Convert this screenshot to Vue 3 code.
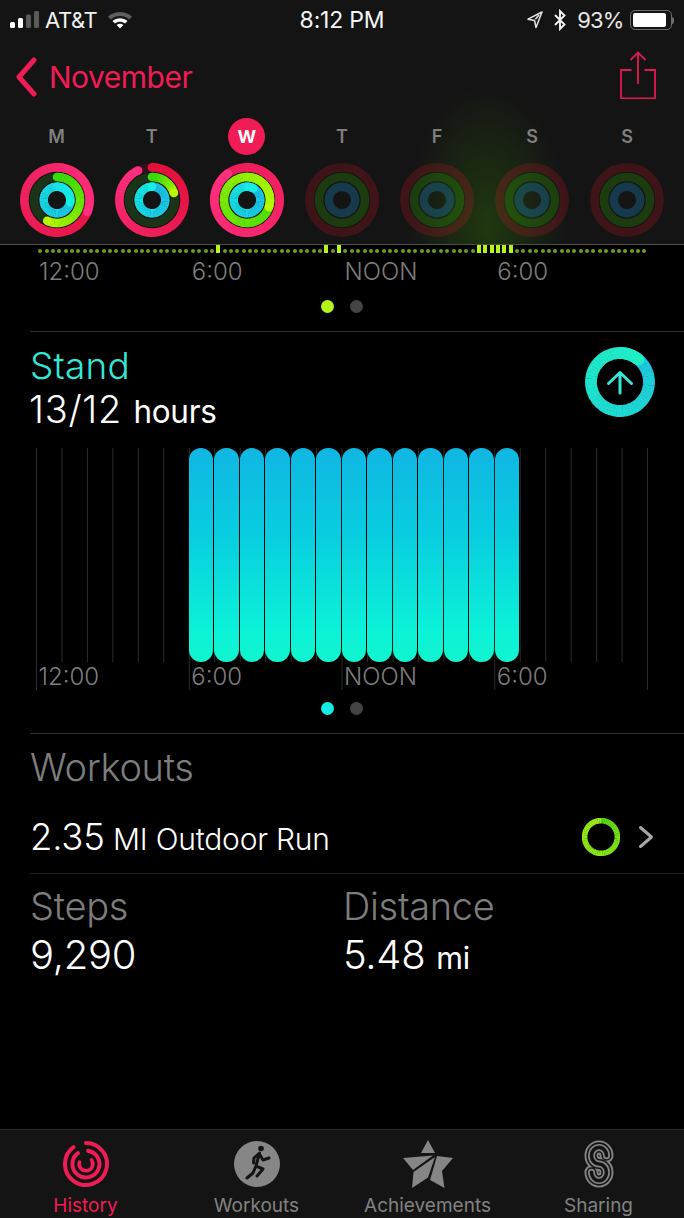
<script setup>
const C = 38
function hex(c) {
  return [1, 3, 5].map((i) => parseInt(c.slice(i, i + 2), 16))
}
function mix(a, b, t) {
  const x = hex(a)
  const y = hex(b)
  return `rgb(${x.map((v, i) => Math.round(v + (y[i] - v) * t)).join(',')})`
}
function pt(r, deg, c = C) {
  const a = ((deg - 90) * Math.PI) / 180
  return [c + r * Math.cos(a), c + r * Math.sin(a)]
}
function arcSegments(r, w, frac, c0, c1, c = C, power = 1.2) {
  const total = frac * 360
  const step = 6
  const out = []
  for (let d = 0; d < total; d += step) {
    const end = Math.min(d + step + 0.8, total)
    const [x0, y0] = pt(r, d, c)
    const [x1, y1] = pt(r, end, c)
    out.push({
      d: `M${x0.toFixed(2)} ${y0.toFixed(2)}A${r} ${r} 0 0 1 ${x1.toFixed(2)} ${y1.toFixed(2)}`,
      color: mix(c0, c1, Math.pow(d / total, power)),
      w,
    })
  }
  const s = pt(r, 0, c)
  const e = pt(r, total, c)
  return {
    segs: out,
    r,
    w,
    startCap: { x: s[0], y: s[1], color: c0 },
    endCap: { x: e[0], y: e[1], color: c1 },
  }
}
const RED0 = '#e2103a'
const RED1 = '#ff2f80'
const GRN0 = '#38dc08'
const GRN1 = '#b8f800'
const BLU0 = '#1cc0ea'
const BLU1 = '#16efe4'
function ring(m, g, b) {
  return [
    arcSegments(32.6, 8.6, m, RED0, RED1),
    arcSegments(23, 8.6, g, GRN0, GRN1),
    arcSegments(13.3, 8.4, b, BLU0, BLU1),
  ]
}
const days = [
  { label: 'M', arcs: ring(1.31, 0.57, 1.28) },
  { label: 'T', arcs: ring(0.93, 0.2, 1.0) },
  { label: 'W', today: true, arcs: ring(1.9, 1.3, 1.08) },
  { label: 'T', dim: true, arcs: [] },
  { label: 'F', dim: true, arcs: [] },
  { label: 'S', dim: true, arcs: [] },
  { label: 'S', dim: true, arcs: [] },
]
const tracks = [
  { r: 32.6, w: 8.6, cls: 'track-r' },
  { r: 23, w: 8.6, cls: 'track-g' },
  { r: 13.3, w: 8.4, cls: 'track-b' },
]
const high = new Set([28, 45, 47, 69, 70, 71, 72, 73, 74])
const ticks = Array.from({ length: 96 }, (_, i) => high.has(i))
const labels = ['12:00', '6:00', 'NOON', '6:00']
const bars = Array.from({ length: 13 }, (_, i) => i)
const gridLines = Array.from({ length: 25 }, (_, i) => ({
  x: 0.5 + i * 25.46,
  y2: i % 6 === 0 ? 242 : 214,
}))
const standRing = arcSegments(29, 11.8, 1.11, '#1cb6e8', '#1ff0c4', 35, 0.6)
const workoutRing = arcSegments(16.4, 5.6, 1.0, '#3ed414', '#9cec18', 19, 0.35)
const sPath = 'M23.5 16.7A7.5 8.3 0 1 0 16 25A7.5 8.3 0 1 1 8.5 33.3'
</script>

<template>
  <div class="screen">
    <header class="top">
      <div class="status">
        <div class="st-left">
          <svg class="signal" width="30" height="20" viewBox="0 0 30 20">
            <rect x="0" y="12" width="5" height="6" rx="1.5" fill="#fff" />
            <rect x="8" y="8" width="5" height="10" rx="1.5" fill="#fff" />
            <rect x="16" y="4.5" width="5" height="13.5" rx="1.5" fill="#5a5a5a" />
            <rect x="24" y="1" width="5" height="17" rx="1.5" fill="#5a5a5a" />
          </svg>
          <span class="carrier">AT&amp;T</span>
          <svg width="26" height="20" viewBox="0 0 26 20">
            <path d="M1 6.5C8 0.5 18 0.5 25 6.5L22.3 9.4C16.6 4.8 9.4 4.8 3.7 9.4Z" fill="#5f5f5f" />
            <path d="M5.5 11C10 7.3 16 7.3 20.5 11L18 13.6C15 11.2 11 11.2 8 13.6Z" fill="#fff" />
            <path d="M9.6 15C11.6 13.4 14.4 13.4 16.4 15L13 18.6Z" fill="#fff" />
          </svg>
        </div>
        <div class="st-time">8:12 PM</div>
        <div class="st-right">
          <svg width="16" height="18" viewBox="0 0 16 18">
            <path d="M15 1L1 8.2L7.6 9.6L9 16.6Z M12 4L8.4 8.2" fill="none" stroke="#e4e4e4" stroke-width="1.5" stroke-linejoin="round" />
          </svg>
          <svg class="bt" width="12" height="22" viewBox="0 0 12 22">
            <path d="M1 6L10.5 15.5L6 20V2L10.5 6.5L1 16" fill="none" stroke="#f2f2f2" stroke-width="1.9" />
          </svg>
          <span class="batt-text">93%</span>
          <div class="battery">
            <div class="batt-body"><div class="batt-fill"></div></div>
            <div class="batt-nub"></div>
          </div>
        </div>
      </div>
      <div class="nav">
        <div class="back">
          <svg width="22" height="40" viewBox="0 0 22 40">
            <path d="M19 3L4 20L19 37" fill="none" stroke="#f01c55" stroke-width="5" stroke-linecap="round" stroke-linejoin="round" />
          </svg>
          <span>November</span>
        </div>
        <svg class="share" width="36" height="48" viewBox="0 0 36 48">
          <path d="M11.5 19H1V47.5H35V19H24.5M18 33V1.5M10.5 9L18 1.5L25.5 9" fill="none" stroke="#e01a50" stroke-width="1.8" />
        </svg>
      </div>
      <div class="week">
        <div v-for="(d, i) in days" :key="i" class="day">
          <div class="day-label" :class="{ today: d.today }">{{ d.label }}</div>
          <svg class="ring" width="76" height="76" viewBox="0 0 76 76">
            <circle
              v-for="t in tracks"
              :key="t.r"
              :cx="38"
              :cy="38"
              :r="t.r"
              :stroke-width="t.w"
              fill="none"
              :class="[t.cls, { dim: d.dim }]"
            />
            <g v-for="(a, j) in d.arcs" :key="j">
              <circle :cx="a.startCap.x" :cy="a.startCap.y" :r="a.w / 2" :fill="a.startCap.color" />
              <path v-for="(s, k) in a.segs" :key="k" :d="s.d" :stroke="s.color" :stroke-width="s.w" fill="none" />
              <circle :cx="a.endCap.x" :cy="a.endCap.y" :r="a.w / 2" :fill="a.endCap.color" />
            </g>
          </svg>
        </div>
      </div>
    </header>

    <main class="content">
      <div class="strip">
        <div v-for="(h, i) in ticks" :key="i" class="cell">
          <div :class="h ? 'bar-on' : 'dot-off'"></div>
        </div>
      </div>
      <div class="axis axis-top">
        <span v-for="(l, i) in labels" :key="i">{{ l }}</span>
      </div>
      <div class="pager pager-top">
        <i class="lime"></i><i class="off"></i>
      </div>

      <section class="stand">
        <div class="stand-head">
          <div>
            <div class="stand-title">Stand</div>
            <div class="stand-val">13/12 <small>hours</small></div>
          </div>
          <svg class="stand-ring" width="70" height="70" viewBox="0 0 70 70">
            <circle :cx="standRing.startCap.x" :cy="standRing.startCap.y" :r="standRing.w / 2" :fill="standRing.startCap.color" />
            <path v-for="(s, k) in standRing.segs" :key="k" :d="s.d" :stroke="s.color" :stroke-width="s.w" fill="none" />
            <circle :cx="standRing.endCap.x" :cy="standRing.endCap.y" :r="standRing.w / 2" :fill="standRing.endCap.color" />
            <path d="M35 46V26M23.5 36.5L35 25.5L46.5 36.5" fill="none" stroke="#35e6d6" stroke-width="3" stroke-linecap="round" stroke-linejoin="round" />
          </svg>
        </div>
        <div class="chart">
          <svg class="grid" width="612" height="242" viewBox="0 0 612 242">
            <line v-for="g in gridLines" :key="g.x" :x1="g.x" :x2="g.x" y1="0" :y2="g.y2" stroke="#2c2c2c" stroke-width="1" />
          </svg>
          <div class="bars">
            <div v-for="b in bars" :key="b" class="bar"></div>
          </div>
          <div class="axis axis-chart">
            <span v-for="(l, i) in labels" :key="i">{{ l }}</span>
          </div>
        </div>
        <div class="pager pager-stand">
          <i class="cyan"></i><i class="off"></i>
        </div>
      </section>

      <section class="workouts">
        <div class="gray-title">Workouts</div>
        <div class="run-row">
          <div class="run-text"><b>2.35</b> MI Outdoor Run</div>
          <svg width="38" height="38" viewBox="0 0 38 38">
            <path v-for="(s, k) in workoutRing.segs" :key="k" :d="s.d" :stroke="s.color" :stroke-width="s.w" fill="none" />
          </svg>
          <svg class="chev" width="16" height="24" viewBox="0 0 16 24">
            <path d="M2.5 2.5L13.5 12L2.5 21.5" fill="none" stroke="#a6a6a6" stroke-width="3" stroke-linecap="round" stroke-linejoin="round" />
          </svg>
        </div>
      </section>

      <section class="metrics">
        <div class="metric">
          <div class="gray-title">Steps</div>
          <div class="metric-val">9,290</div>
        </div>
        <div class="metric">
          <div class="gray-title">Distance</div>
          <div class="metric-val">5.48 <small>mi</small></div>
        </div>
      </section>
    </main>

    <nav class="tabs">
      <div class="tab active">
        <svg width="50" height="50" viewBox="0 0 50 50">
          <g fill="none" stroke="#f01c55" stroke-linecap="round">
            <path d="M25 4A21 21 0 1 1 12.5 8.1" stroke-width="4" />
            <path d="M27 11.7A13.5 13.5 0 1 1 17 14.1" stroke-width="4" />
            <path d="M30.5 21A6.8 6.8 0 1 1 18.5 23" stroke-width="3.6" />
          </g>
        </svg>
        <span>History</span>
      </div>
      <div class="tab">
        <svg width="50" height="50" viewBox="0 0 50 50">
          <circle cx="25" cy="25" r="23" fill="#868686" />
          <circle cx="29" cy="9.5" r="2.8" fill="#141414" />
          <path d="M27.5 14L24 27M27 14.5L22 19L21.5 24M28 16L31 21L37 19M24 27L31 30L25 37M23.5 28L21 34L15 39" fill="none" stroke="#141414" stroke-width="3" stroke-linecap="round" stroke-linejoin="round" />
        </svg>
        <span>Workouts</span>
      </div>
      <div class="tab">
        <svg width="52" height="50" viewBox="0 0 52 50">
          <path d="M26 1L33 14H19Z" fill="#868686" />
          <path d="M1 19L31 16.5L11 31Z" fill="#868686" />
          <path d="M33 18L26 38.5L10 49L11.5 33Z" fill="#868686" />
          <path d="M35 17L51 19L40 32L42.5 49L28 41Z" fill="#868686" />
        </svg>
        <span>Achievements</span>
      </div>
      <div class="tab">
        <svg width="32" height="50" viewBox="0 0 32 50">
          <g fill="none" stroke-linecap="round">
            <path :d="sPath" stroke="#868686" stroke-width="14" />
            <path :d="sPath" stroke="#141414" stroke-width="10.2" />
            <path :d="sPath" stroke="#868686" stroke-width="7" />
            <path :d="sPath" stroke="#141414" stroke-width="3.6" />
          </g>
        </svg>
        <span>Sharing</span>
      </div>
    </nav>
  </div>
</template>

<style>
html,
body {
  margin: 0;
  background: #000;
}
</style>

<style scoped>
.screen {
  width: 684px;
  height: 1218px;
  display: flex;
  flex-direction: column;
  background: #000;
  color: #fff;
  font-family: Inter, "Liberation Sans", sans-serif;
  overflow: hidden;
}
.top {
  height: 244px;
  box-sizing: content-box;
  border-bottom: 1px solid #4c4c4c;
  background:
    radial-gradient(ellipse 80px 140px at 487px 225px, rgba(50, 115, 10, 0.38), rgba(40, 90, 10, 0) 100%),
    #141414;
  display: flex;
  flex-direction: column;
  flex: none;
}
.status {
  height: 40px;
  display: grid;
  grid-template-columns: 1fr auto 1fr;
  align-items: center;
  font-size: 22px;
  font-weight: 400;
}
.st-left {
  display: flex;
  align-items: center;
  padding-left: 10px;
  gap: 5px;
}
.carrier {
  letter-spacing: -0.4px;
  color: #f0f0f0;
  margin-right: 5px;
}
.st-time {
  font-size: 23px;
  letter-spacing: -0.2px;
  color: #f4f4f4;
}
.st-right {
  display: flex;
  align-items: center;
  justify-content: flex-end;
  padding-right: 10px;
  gap: 6px;
}
.bt {
  margin-left: 5px;
  margin-right: 5px;
}
.batt-text {
  letter-spacing: -0.9px;
  color: #e8e8e8;
}
.battery {
  display: flex;
  align-items: center;
}
.batt-body {
  width: 42px;
  height: 20px;
  box-sizing: border-box;
  border: 1.5px solid #6c6c6c;
  border-radius: 5px;
  padding: 2px;
}
.batt-fill {
  width: 93%;
  height: 100%;
  border-radius: 2px;
  background: #fff;
}
.batt-nub {
  width: 2.5px;
  height: 7px;
  background: #6c6c6c;
  border-radius: 0 2px 2px 0;
}
.nav {
  height: 71px;
  display: flex;
  justify-content: space-between;
  align-items: flex-start;
  padding: 11px 28px 0 15px;
  box-sizing: border-box;
}
.back {
  display: flex;
  align-items: center;
  gap: 12px;
  color: #f01c55;
  font-size: 30px;
  letter-spacing: -0.5px;
  margin-top: 6px;
  height: 40px;
}
.share {
  display: block;
}
.week {
  display: grid;
  grid-template-columns: repeat(7, 95.1px);
  padding-left: 9px;
  margin-top: 7px;
}
.day {
  display: flex;
  flex-direction: column;
  align-items: center;
}
.day-label {
  width: 37px;
  height: 37px;
  margin-bottom: 7px;
  border-radius: 50%;
  display: flex;
  align-items: center;
  justify-content: center;
  font-size: 18px;
  font-weight: 600;
  color: #7f7f7f;
}
.day-label.today {
  background: #f01c55;
  color: #fff;
  font-weight: 700;
}
.ring {
  display: block;
}
.track-r {
  stroke: #3a0e1a;
}
.track-g {
  stroke: #1b3316;
}
.track-b {
  stroke: #103a44;
}
.track-r.dim {
  stroke: rgba(255, 20, 50, 0.18);
}
.track-g.dim {
  stroke: rgba(60, 220, 0, 0.2);
}
.track-b.dim {
  stroke: rgba(30, 170, 235, 0.26);
}
.content {
  flex: 1;
  min-height: 0;
}
.strip {
  display: flex;
  height: 8px;
  padding-left: 37px;
  align-items: flex-end;
}
.cell {
  width: 6.37px;
  flex: none;
  display: flex;
  justify-content: center;
  align-items: flex-end;
}
.dot-off {
  width: 4px;
  height: 4px;
  border-radius: 50%;
  background: #6f9d1c;
}
.bar-on {
  width: 4px;
  height: 8px;
  background: #b4f51c;
}
.axis {
  display: grid;
  grid-template-columns: repeat(4, 152.75px);
  padding-left: 36.5px;
  color: #7d7d7d;
  font-size: 24px;
  font-weight: 300;
  line-height: 28px;
  position: relative;
}
.axis span {
  padding-left: 2.5px;
}
.axis-top {
  margin-top: 5px;
}
.pager {
  display: flex;
  justify-content: center;
  gap: 16px;
}
.pager i {
  width: 13px;
  height: 13px;
  border-radius: 50%;
  display: block;
}
.pager .off {
  background: #444;
}
.pager .lime {
  background: #b4f51c;
}
.pager .cyan {
  background: #14ece6;
}
.pager-top {
  margin-top: 14px;
  height: 31px;
  border-bottom: 1px solid #2e2e2e;
  margin-left: 30px;
  padding-right: 30px;
}
.stand-head {
  display: flex;
  justify-content: space-between;
  align-items: flex-start;
  padding: 13px 29px 0 30px;
  height: 116px;
  box-sizing: border-box;
}
.stand-ring {
  margin-top: 2px;
}
.stand-title {
  color: #35e6d6;
  font-size: 37px;
  font-weight: 300;
  line-height: 42px;
  letter-spacing: 0.2px;
}
.stand-val {
  font-size: 38px;
  font-weight: 300;
  line-height: 44px;
  letter-spacing: 0.7px;
  margin-left: -1px;
}
.stand-val small {
  font-size: 31.5px;
  font-weight: 400;
  letter-spacing: -0.3px;
}
.chart {
  position: relative;
  height: 242px;
  margin-left: 36px;
}
.grid {
  position: absolute;
  left: 0;
  top: 0;
}
.bars {
  position: relative;
  display: flex;
  gap: 1.2px;
  height: 214px;
  margin-left: 153px;
}
.bar {
  width: 24.3px;
  height: 100%;
  border-radius: 12.15px;
  background: linear-gradient(180deg, #10b6e2 0%, #08cde0 40%, #0bf2d8 85%, #10f5cf 100%);
}
.axis-chart {
  padding-left: 0;
  margin-top: 1px;
}
.pager-stand {
  margin-top: 12px;
  height: 31px;
  margin-left: 30px;
  padding-right: 30px;
  border-bottom: 1px solid #2e2e2e;
}
.gray-title {
  color: #7d7d7d;
  font-size: 38px;
  font-weight: 300;
  line-height: 40px;
  letter-spacing: -0.3px;
}
.workouts {
  padding: 13px 0 0 30px;
}
.run-row {
  display: flex;
  align-items: center;
  height: 87px;
  padding-top: 13px;
  border-bottom: 1px solid #1c1c1c;
  padding-right: 30px;
  box-sizing: border-box;
}
.run-text {
  flex: 1;
  font-size: 30px;
  font-weight: 300;
  letter-spacing: -0.2px;
}
.run-text b {
  font-size: 36.5px;
  font-weight: 300;
}
.chev {
  margin-left: 18px;
}
.metrics {
  display: grid;
  grid-template-columns: 313px 1fr;
  padding: 12px 0 0 30px;
}
.metric-val {
  font-size: 40px;
  font-weight: 300;
  line-height: 54px;
  margin-top: 2px;
  letter-spacing: -0.3px;
}
.metric-val small {
  font-size: 30.5px;
  font-weight: 400;
}
.tabs {
  flex: none;
  height: 89px;
  box-sizing: border-box;
  background: #141414;
  border-top: 1px solid #2a2a2a;
  display: grid;
  grid-template-columns: repeat(4, 171px);
}
.tab {
  display: flex;
  flex-direction: column;
  align-items: center;
  color: #828282;
  font-size: 19px;
  padding-top: 9px;
}
.tab svg {
  display: block;
}
.tab span {
  line-height: 22px;
  margin-top: 6px;
}
.tab.active span {
  color: #f01c55;
}
</style>
